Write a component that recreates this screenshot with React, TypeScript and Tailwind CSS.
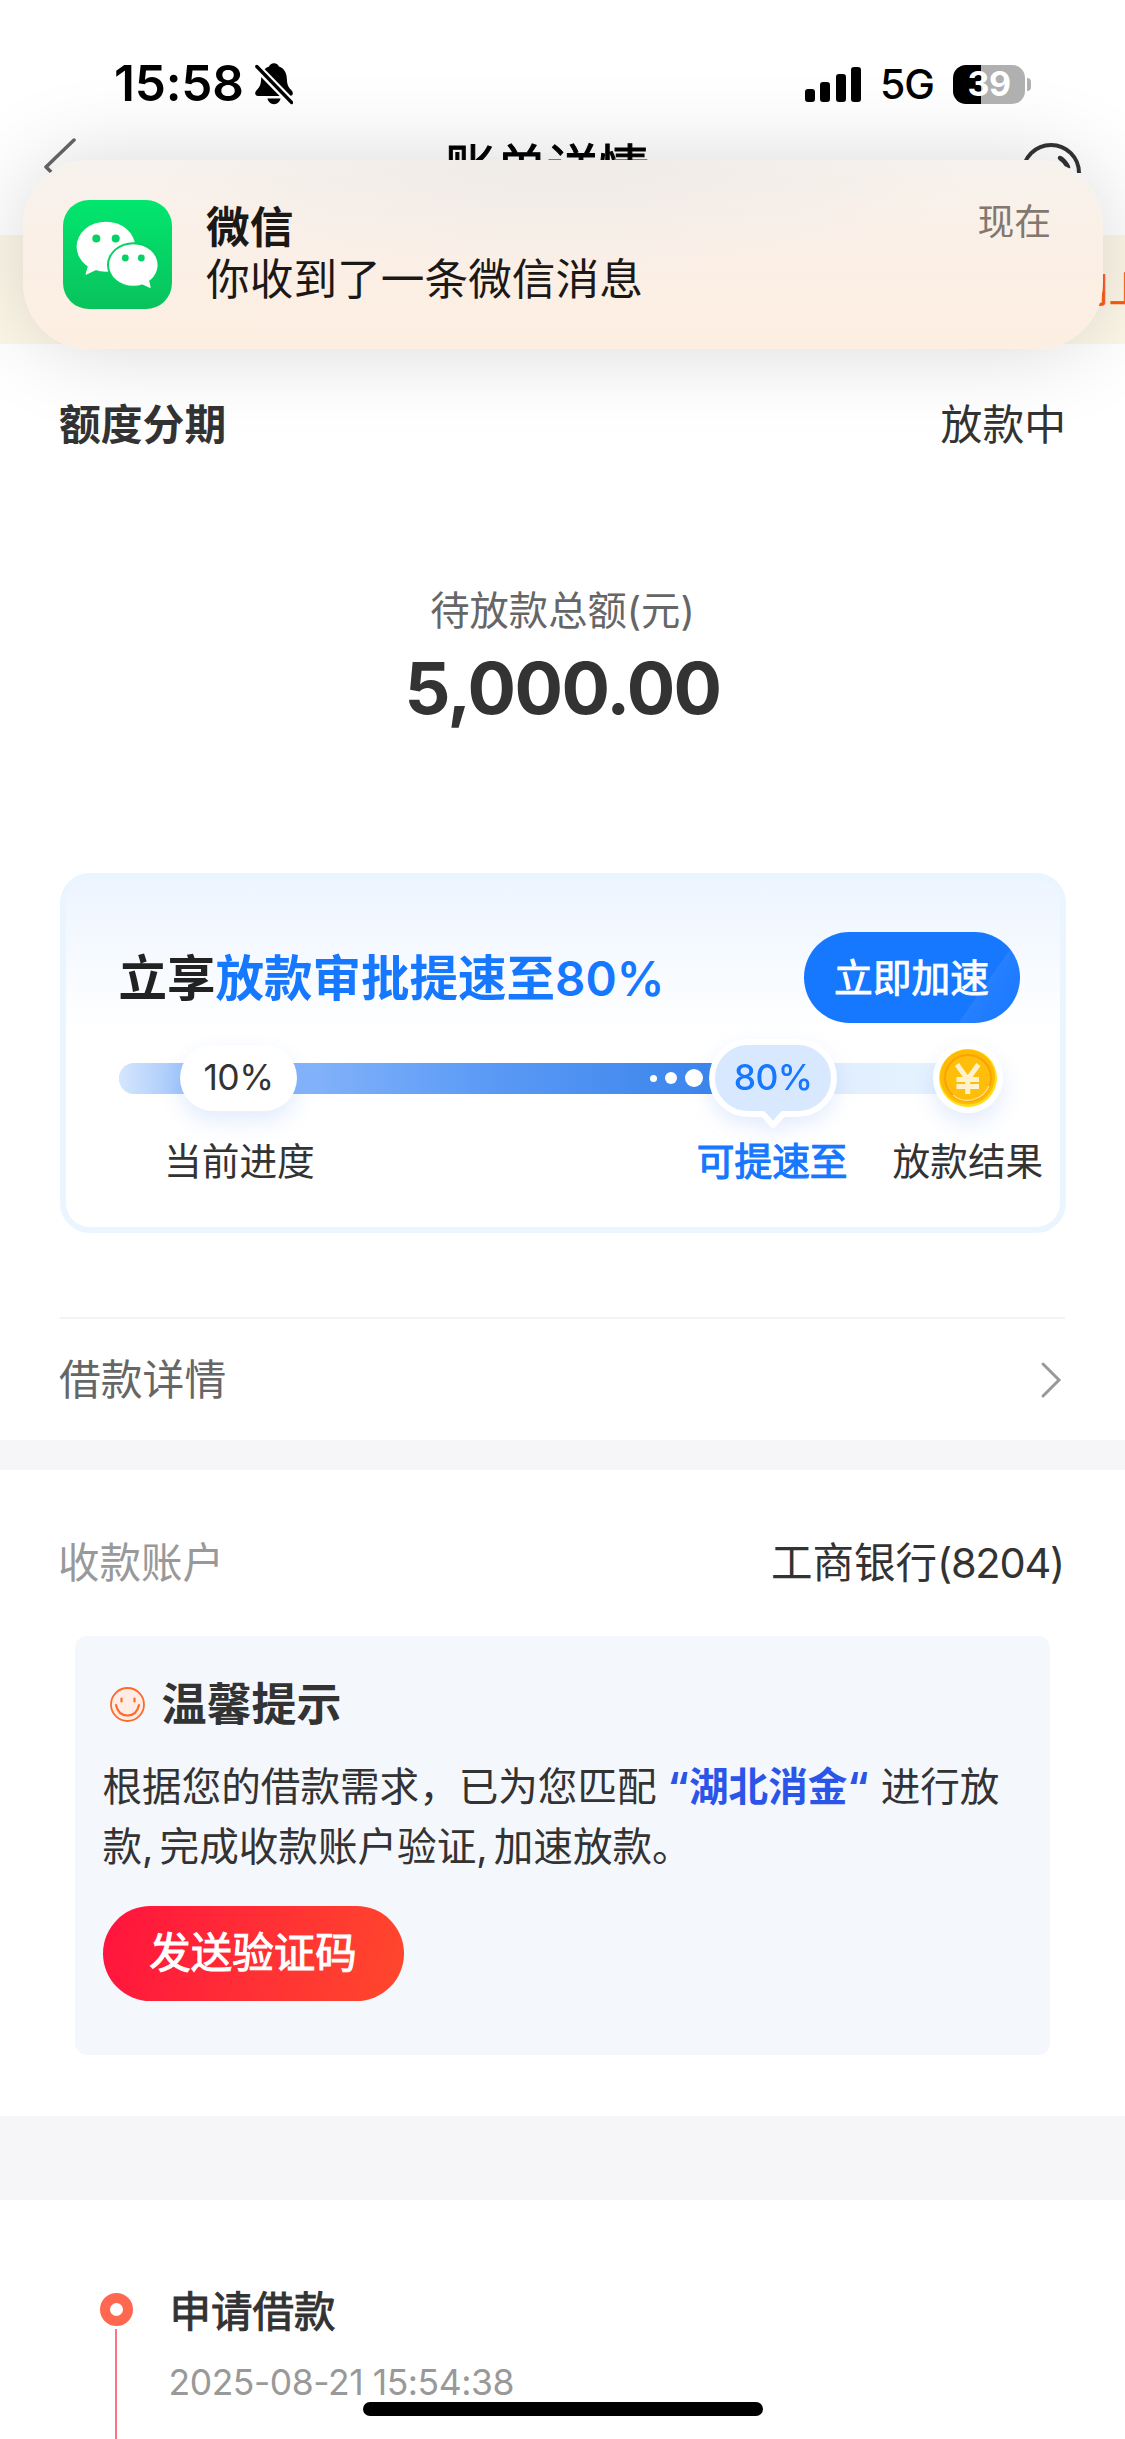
import React from "react";

function BellSlash() {
  return (
    <svg className="ml-[11px] h-[42px] w-[38px]" viewBox="0 0 38 42">
      <path
        d="M19 0.3c2.6 0 4.3 1.5 4.9 3.3 5.2 1.8 7.6 6.2 7.9 11.4.3 6 .9 8.700 4.400 12 1.200 1.200 1.600 2.200 1.600 3.300 0 1.800-1.200 2.700-3 2.700H3.200c-1.800 0-3-.9-3-2.700 0-1.100.5-2.100 1.600-3.300C5.300 23.700 5.900 21 6.200 15c.3-5.200 2.700-9.600 7.900-11.400C14.700 1.800 16.400.3 19 .3z"
        fill="#000"
      />
      <path d="M12.500 35.500h13c-.6 3.300-3.300 5.700-6.500 5.700s-5.900-2.400-6.500-5.700z" fill="#000" />
      <path d="M1.500 3.500l35 36" stroke="#fff" strokeWidth="8" />
      <path d="M1.800 3.500l34.800 36" stroke="#000" strokeWidth="3.300" strokeLinecap="round" />
    </svg>
  );
}

function Signal() {
  return (
    <div className="flex h-[36px] items-end gap-[5.400px]">
      <div className="h-[13px] w-[10px] rounded-[3px] bg-black" />
      <div className="h-[20px] w-[10px] rounded-[3px] bg-black" />
      <div className="h-[28px] w-[10px] rounded-[3px] bg-black" />
      <div className="h-[35px] w-[10px] rounded-[3px] bg-black" />
    </div>
  );
}

function Battery() {
  return (
    <div className="ml-[19px] flex items-center gap-[2px]">
      <div className="relative flex h-[39px] w-[72px] items-center justify-center overflow-hidden rounded-[13px] bg-[linear-gradient(to_right,#000_39%,#b0b0b0_39%)] text-[34px] leading-none font-bold tracking-[-0.5px] text-white">
        39
      </div>
      <div className="h-[13px] w-[4px] rounded-r-full bg-[#b0b0b0]" />
    </div>
  );
}

function StatusBar() {
  return (
    <div className="relative z-20 flex h-[120px] items-center pt-[48px] pr-[94px] pl-[114px]">
      <div className="text-[49.500px] leading-none font-semibold tracking-[-0.2px]">15:58</div>
      <BellSlash />
      <div className="ml-auto flex items-center">
        <Signal />
        <div className="ml-[19px] text-[41px] leading-none font-medium tracking-[-1px]">5G</div>
        <Battery />
      </div>
    </div>
  );
}

function NavBar() {
  return (
    <div className="flex h-[115px] items-center justify-between pr-[43px] pb-[22px] pl-[43px]">
      <svg className="h-[58px] w-[34px]" viewBox="0 0 34 58" fill="none">
        <path d="M31 2L3 29l28 27" stroke="#666" strokeWidth="3.500" strokeLinecap="round" strokeLinejoin="round" />
      </svg>
      <div className="pt-[3px] pr-[3px] text-[51px] leading-none text-black [-webkit-text-stroke:1px_currentColor]">
        账单详情
      </div>
      <svg className="h-[64px] w-[62px]" viewBox="0 0 62 64" fill="none">
        <path d="M3 38a28 28 0 1 1 56 0" stroke="#333" strokeWidth="4" />
        <path d="M40 23q5 3 8 9" stroke="#333" strokeWidth="4.500" strokeLinecap="round" />
      </svg>
    </div>
  );
}

function WeChatIcon() {
  return (
    <svg className="h-[109px] w-[109px]" viewBox="0 0 109 109">
      <defs>
        <linearGradient id="wechat" x1="0" y1="0" x2="0" y2="1">
          <stop offset="0" stopColor="#02e66e" />
          <stop offset="1" stopColor="#09c25c" />
        </linearGradient>
      </defs>
      <rect width="109" height="109" rx="26" fill="url(#wechat)" />
      <ellipse cx="42.900" cy="46.700" rx="29.300" ry="25" fill="#fff" />
      <path d="M26 64l-3 10.300 10.500-5z" fill="#fff" stroke="#fff" strokeWidth="1" strokeLinejoin="round" />
      <ellipse cx="70.300" cy="65" rx="26.300" ry="22.800" fill="#05d063" />
      <ellipse cx="70.300" cy="65" rx="24.300" ry="20.800" fill="#fff" />
      <path d="M85 78l2.200 9.500-8.700-4z" fill="#fff" stroke="#fff" strokeWidth="1" strokeLinejoin="round" />
      <g fill="#05d264">
        <circle cx="33.300" cy="38.600" r="4" />
        <circle cx="52.700" cy="38.600" r="4" />
        <circle cx="62.300" cy="58" r="3.400" />
        <circle cx="78.300" cy="58" r="3.400" />
      </g>
    </svg>
  );
}

function Notification() {
  return (
    <div className="absolute top-[160px] left-[23px] z-10 flex h-[189px] w-[1080px] rounded-[66px] bg-[radial-gradient(ellipse_420px_110px_at_50%_0,#efebe7_0%,#efebe700_100%),linear-gradient(to_bottom,#f7f2ed_0%,#faf0e8_35%,#fdeee1_100%)] pt-10 pr-[52px] pl-10 shadow-[0_0_90px_-4px_rgba(0,0,0,0.17)]">
      <WeChatIcon />
      <div className="ml-[34px] flex flex-col pt-[2px] text-[43.700px] text-[#1b1917]">
        <div className="flex h-[52px] items-center leading-none font-bold">微信</div>
        <div className="flex h-[52px] items-center leading-none">你收到了一条微信消息</div>
      </div>
      <div className="ml-auto flex h-[44px] items-center text-[36.800px] leading-none text-[#83786f]">现在</div>
    </div>
  );
}

function Coin() {
  return (
    <svg className="h-[70px] w-[70px]" viewBox="0 0 70 70">
      <circle cx="35" cy="35" r="35" fill="#fff" />
      <circle cx="35" cy="35" r="29" fill="#ffdf1a" />
      <circle cx="34.500" cy="34" r="27.500" fill="#ffba05" />
      <circle cx="35" cy="35" r="23" fill="#ffbe0a" stroke="#f8a303" strokeWidth="2" />
      <path d="M20 52a23 23 0 0 0 36-9" fill="none" stroke="#ffe07a" strokeWidth="1.500" />
      <path
        d="M24 21.500l10.700 15 10.700-15M34.700 34v17M23.500 36.500h22.500M23.500 43.500h22.500"
        fill="none"
        stroke="#fff3cf"
        strokeWidth="5"
      />
    </svg>
  );
}

function SpeedCard() {
  return (
    <div className="mx-[59.500px] mt-[147px] h-[360px] rounded-[30px] border-[6px] border-[#ebf5ff] bg-[linear-gradient(to_bottom,#edf5ff_0px,#f8fbff_95px,#fff_150px)] pt-[53px]">
      <div className="flex h-[91px] items-center justify-between pr-[40px] pl-[53px]">
        <div className="pt-[3px] text-[48.500px] leading-none whitespace-nowrap text-[#1677ff]">
          <span className="font-bold text-[#222]">立享</span>
          <span className="font-bold">放款审批提速至</span>
          <span className="text-[47.500px] font-semibold">80%</span>
        </div>
        <button className="flex h-[91px] w-[216px] items-center justify-center rounded-full bg-[linear-gradient(125deg,#1677ff_78%,#2680ff_78%,#1677ff_100%)] pt-[2px] text-[38.800px] leading-none text-white [-webkit-text-stroke:0.9px_currentColor]">
          立即加速
        </button>
      </div>

      <div className="relative mt-[17px] ml-[53.500px] flex h-[76px] w-[870px] items-center">
        <div className="h-[31px] w-full rounded-full bg-[linear-gradient(to_right,#d4e4fd_0,#dcebfe_620px,#e8f4ff_870px)]">
          <div className="flex h-full w-[600px] items-center justify-end gap-[8px] rounded-l-full bg-[linear-gradient(to_right,#d6e6fd_0%,#a5c8fb_10%,#85b4fa_30%,#5c9bf6_60%,#3a84eb_100%)] pr-[16px]">
            <span className="h-[7px] w-[7px] rounded-full bg-white" />
            <span className="h-[12px] w-[12px] rounded-full bg-white" />
            <span className="h-[18px] w-[18px] rounded-full bg-white" />
          </div>
        </div>
        <div className="absolute top-[5px] left-[61px] flex h-[66px] w-[117px] items-center justify-center rounded-full bg-white text-[35.500px] leading-none tracking-[-0.5px] text-[#333] shadow-[0_10px_22px_rgba(60,120,240,0.14)]">
          10%
        </div>
        <div className="absolute top-[-1px] left-[590px] h-[90px] w-[128px] drop-shadow-[0_8px_10px_rgba(60,120,240,0.14)]">
          <svg className="absolute inset-0" viewBox="0 0 128 90" width="128" height="90">
            <path
              d="M39 3h50a36 36 0 0 1 0 72H74L64 86 54 75H39a36 36 0 0 1 0-72z"
              fill="#d8e8ff"
              stroke="#fff"
              strokeWidth="6"
              strokeLinejoin="round"
            />
          </svg>
          <div className="relative flex h-[78px] items-center justify-center text-[35.500px] leading-none font-medium tracking-[-0.7px] text-[#1677ff]">
            80%
          </div>
        </div>
        <div className="absolute top-[3px] left-[814px] rounded-full shadow-[0_10px_22px_rgba(60,120,240,0.14)]">
          <Coin />
        </div>
      </div>

      <div className="flex h-[88px] items-center pt-[3px] pl-[98.500px] text-[37.700px] leading-none whitespace-nowrap text-[#333]">
        <span>当前进度</span>
        <span className="ml-[382px] text-[#1677ff] [-webkit-text-stroke:1.200px_currentColor]">可提速至</span>
        <span className="ml-[45px]">放款结果</span>
      </div>
    </div>
  );
}

function Smiley() {
  return (
    <svg className="h-[37px] w-[37px]" viewBox="0 0 37 37" fill="none" stroke="#ff6a2b" strokeLinecap="round">
      <circle cx="18.500" cy="18.500" r="16.500" fill="#ffece4" strokeWidth="1.800" />
      <path d="M12.500 12.500v3M25.500 12.500v3" strokeWidth="2.200" />
      <path d="M7 19c1.500 7 6 10.500 11.500 10.500S28.500 26 30 19" strokeWidth="2.200" />
    </svg>
  );
}

function TipBox() {
  return (
    <div className="mr-[75px] mb-[61px] ml-[75px] h-[419px] rounded-[12px] bg-[#f4f7fc] pt-[38px] pl-[27.500px]">
      <div className="flex h-[60px] items-center gap-[16px] pl-[6px]">
        <Smiley />
        <div className="pt-[1px] text-[45px] leading-none font-bold text-[#333]">温馨提示</div>
      </div>
      <div className="mt-[24px] text-[39.600px] leading-[59.500px] whitespace-nowrap text-[#333]">
        <div>
          根据您的借款需求，已为您匹配
          <span className="ml-[11px] font-bold text-[#2b54e8]">“湖北消金“</span>
          <span className="ml-[12px]">进行放</span>
        </div>
        <div className="[word-spacing:-5px]">款, 完成收款账户验证, 加速放款。</div>
      </div>
      <button className="mt-[29px] flex h-[95px] w-[301px] items-center justify-center rounded-full bg-[linear-gradient(105deg,#ff133e_0%,#ff2f35_50%,#ff482c_100%)] pt-[1px] text-[41.500px] leading-none text-white [-webkit-text-stroke:1px_currentColor]">
        发送验证码
      </button>
    </div>
  );
}

function Timeline() {
  return (
    <div className="flex flex-1 pl-[99.500px]">
      <div className="flex w-[33px] flex-col items-center pt-[93px]">
        <div className="h-[33px] w-[33px] shrink-0 rounded-full border-[10px] border-[#ff6850] bg-white" />
        <div className="mt-[3px] w-[2px] flex-1 bg-[#f97583]" />
      </div>
      <div className="ml-[37px] pt-[88px]">
        <div className="flex h-[50px] items-center text-[41.500px] leading-none text-[#333] [-webkit-text-stroke:1px_currentColor]">
          申请借款
        </div>
        <div className="mt-[25px] -ml-px flex h-[40px] items-center text-[35.500px] leading-none tracking-[-0.45px] text-[#999]">
          2025-08-21 15:54:38
        </div>
      </div>
    </div>
  );
}

export default function App() {
  return (
    <div className="relative flex h-[2439px] w-[1125px] flex-col overflow-hidden bg-white font-[Inter,'Noto_Sans_CJK_SC',sans-serif]">
      <StatusBar />
      <NavBar />
      <div className="flex h-[109px] items-center justify-end overflow-hidden bg-[#fdf7e8]">
        <div className="mr-[-20px] text-[36px] leading-none whitespace-nowrap text-[#ff5a0f] [-webkit-text-stroke:0.600px_currentColor]">
          用上
        </div>
      </div>
      <Notification />

      <div className="flex h-[160px] items-center justify-between px-[59px] pt-[3px] text-[41.800px] leading-none text-[#333]">
        <span className="font-bold">额度分期</span>
        <span>放款中</span>
      </div>

      <div className="mt-[87px] flex h-[40px] items-center justify-center text-[39.300px] leading-none text-[#666]">
        待放款总额(元)
      </div>
      <div className="mt-[19px] flex h-[76px] items-center justify-center text-[72px] leading-none font-bold tracking-[-1.600px] text-[#333]">
        5,000.00
      </div>

      <SpeedCard />

      <div className="mx-[60px] mt-[84px] h-[2px] bg-[#f3f3f3]" />
      <div className="flex h-[121px] items-center justify-between px-[59px] text-[41.800px] leading-none text-[#666]">
        <span className="pt-[2px]">借款详情</span>
        <svg className="h-[38px] w-[26px]" viewBox="0 0 26 38" fill="none">
          <path d="M3 3l16 16L3 35" stroke="#999" strokeWidth="3" strokeLinecap="round" />
        </svg>
      </div>
      <div className="h-[30px] bg-[#f6f6f9]" />

      <div className="flex h-[166px] items-center justify-between pt-[21px] pr-[61px] pl-[58px] text-[41.500px] leading-none">
        <span className="text-[#999]">收款账户</span>
        <span className="text-[#333]">
          工商银行<span className="tracking-[-1.200px]">(8204)</span>
        </span>
      </div>
      <TipBox />
      <div className="h-[84px] shrink-0 bg-[#f6f6f8]" />
      <Timeline />

      <div className="absolute bottom-[23px] left-[363px] h-[14px] w-[400px] rounded-full bg-black" />
    </div>
  );
}
